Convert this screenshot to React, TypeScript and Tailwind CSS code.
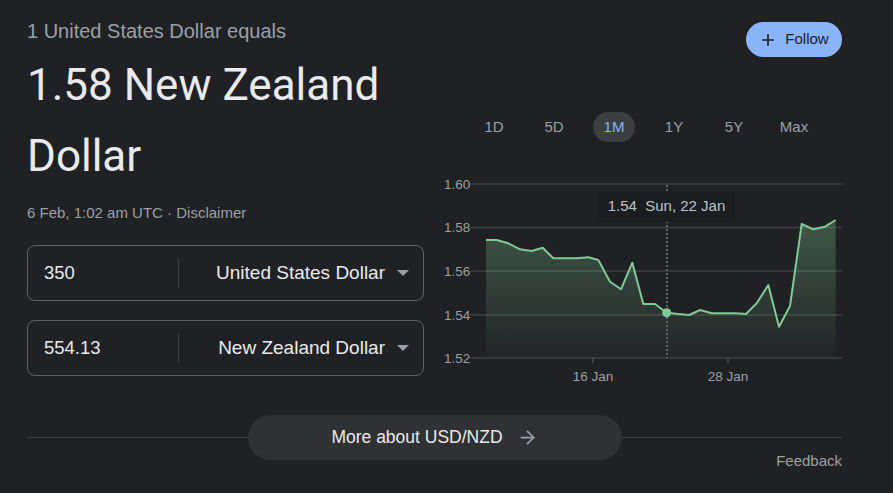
import { Plus, ArrowRight } from "lucide-react";

const RANGES = ["1D", "5D", "1M", "1Y", "5Y", "Max"];
const SANS = "'Liberation Sans', Arial, sans-serif";

// chart points, relative to the svg origin
const POINTS: [number, number][] = [
  [42, 68], [52.7, 68], [64.3, 71.3], [76, 77.3], [87.7, 79], [98.7, 75.7],
  [109.3, 86.3], [121, 86.3], [132.7, 86.3], [144.3, 85.3], [154.3, 88],
  [166, 109.7], [177, 117.3], [188.3, 90.7], [199.3, 132], [211, 132],
  [222.7, 140.7], [234.3, 142], [245.3, 143], [256, 138], [267.7, 141.3],
  [279.3, 141.3], [291, 141.3], [302, 142], [312.7, 131.3], [324.3, 113],
  [335, 154.7], [346, 134], [357.7, 52], [369.3, 57.3], [381, 54.7], [391.7, 48],
];

const GRID = [
  { y: 12, label: "1.60" },
  { y: 55.5, label: "1.58" },
  { y: 99, label: "1.56" },
  { y: 143, label: "1.54" },
  { y: 186, label: "1.52" },
];

function Chart() {
  const line = POINTS.map(([x, y], i) => `${i ? "L" : "M"}${x} ${y}`).join(" ");
  const area = `${line} L391.7 186 L42 186 Z`;
  return (
    <svg width="398" height="218" viewBox="0 0 398 218" className="block">
      <defs>
        <linearGradient id="fill" x1="0" y1="0" x2="0" y2="1">
          <stop offset="0%" stopColor="#81c995" stopOpacity="0.32" />
          <stop offset="100%" stopColor="#81c995" stopOpacity="0.02" />
        </linearGradient>
      </defs>
      {GRID.map((g) => (
        <g key={g.label}>
          <line x1="26" x2="398" y1={g.y} y2={g.y} stroke="#3c4043" strokeWidth="1.5" />
          <text x="0" y={g.y + 4.5} fontSize="13.5" fill="#9aa0a6" fontFamily={SANS}>
            {g.label}
          </text>
        </g>
      ))}
      <path d={area} fill="url(#fill)" />
      <line x1="223" x2="223" y1="13" y2="186" stroke="#9aa0a6" strokeWidth="1" strokeDasharray="2 2" />
      <path d={line} fill="none" stroke="#81c995" strokeWidth="2" strokeLinejoin="round" />
      <circle cx="222.7" cy="140.7" r="4.5" fill="#81c995" />
      <line x1="149" x2="149" y1="186" y2="191" stroke="#5f6368" />
      <line x1="284" x2="284" y1="186" y2="191" stroke="#5f6368" />
      <text x="149" y="209" fontSize="13.5" fill="#9aa0a6" textAnchor="middle" fontFamily={SANS}>
        16 Jan
      </text>
      <text x="284" y="209" fontSize="13.5" fill="#9aa0a6" textAnchor="middle" fontFamily={SANS}>
        28 Jan
      </text>
      <rect x="154" y="20" width="137" height="30" fill="#1c1d20" />
      <text x="222.5" y="39" fontSize="15" fill="#bdc1c6" textAnchor="middle" fontFamily={SANS} xmlSpace="preserve">
        1.54  Sun, 22 Jan
      </text>
    </svg>
  );
}

function CurrencyBox({ amount, currency, className }: { amount: string; currency: string; className?: string }) {
  return (
    <div className={`h-[56px] rounded-lg border border-[#5f6368] flex items-center ${className ?? ""}`}>
      <div className="w-[150px] pl-[16px] text-[18.5px] text-[#e8eaed]">{amount}</div>
      <div className="w-px h-[30px] bg-[#3c4043]" />
      <div className="flex-1 flex items-center justify-end pr-[14px] text-[19px] text-[#e8eaed]">
        <span>{currency}</span>
        <span className="ml-[12px] w-0 h-0 border-l-[6px] border-r-[6px] border-t-[6px] border-l-transparent border-r-transparent border-t-[#9aa0a6]" />
      </div>
    </div>
  );
}

export default function App() {
  return (
    <div className="w-[893px] h-[493px] bg-[#202124] pl-[27px] pr-[51px] overflow-hidden font-['Liberation_Sans',Arial,sans-serif]">
      <div className="flex items-start">
        {/* Left: conversion */}
        <div className="w-[397px] shrink-0">
          <p className="mt-[19px] text-[20px] leading-[24px] text-[#9aa0a6]">1 United States Dollar equals</p>
          <div className="mt-[7px] font-['Roboto',Arial,sans-serif] text-[44px] leading-[71px] text-[#e8eaed]">
            1.58 New Zealand
            <br />
            Dollar
          </div>
          <p className="mt-[11px] text-[15px] leading-[20px] text-[#9aa0a6]">6 Feb, 1:02 am UTC · Disclaimer</p>
          <CurrencyBox className="mt-[22px]" amount="350" currency="United States Dollar" />
          <CurrencyBox className="mt-[19px]" amount="554.13" currency="New Zealand Dollar" />
        </div>

        {/* Right: chart */}
        <div className="ml-[20px] flex-1">
          <div className="mt-[22px] flex justify-end">
            <button className="h-[35px] w-[96px] rounded-full bg-[#8ab4f8] text-[#202124] text-[15px] flex items-center justify-center gap-[8px]">
              <Plus size={18} strokeWidth={2.2} />
              Follow
            </button>
          </div>
          <div className="mt-[55px] pl-[29px] flex gap-[18px]">
            {RANGES.map((r) => (
              <div
                key={r}
                className={`w-[42px] h-[30px] rounded-full flex items-center justify-center text-[15px] ${
                  r === "1M" ? "bg-[#3c4043] text-[#8ab4f8]" : "text-[#9aa0a6]"
                }`}
              >
                {r}
              </div>
            ))}
          </div>
          <div className="mt-[30px]">
            <Chart />
          </div>
        </div>
      </div>

      {/* Bottom */}
      <div className="mt-[25px] flex items-center">
        <div className="flex-1 h-px bg-[#3c4043]" />
        <button className="w-[374px] h-[45px] rounded-full bg-[#303134] text-[#e8eaed] text-[17.5px] flex items-center justify-center gap-[14px]">
          More about USD/NZD
          <ArrowRight size={21} className="text-[#9aa0a6]" />
        </button>
        <div className="flex-1 h-px bg-[#3c4043]" />
      </div>
      <div className="-mt-[9px] flex justify-end">
        <span className="text-[15px] leading-[20px] text-[#9aa0a6]">Feedback</span>
      </div>
    </div>
  );
}
